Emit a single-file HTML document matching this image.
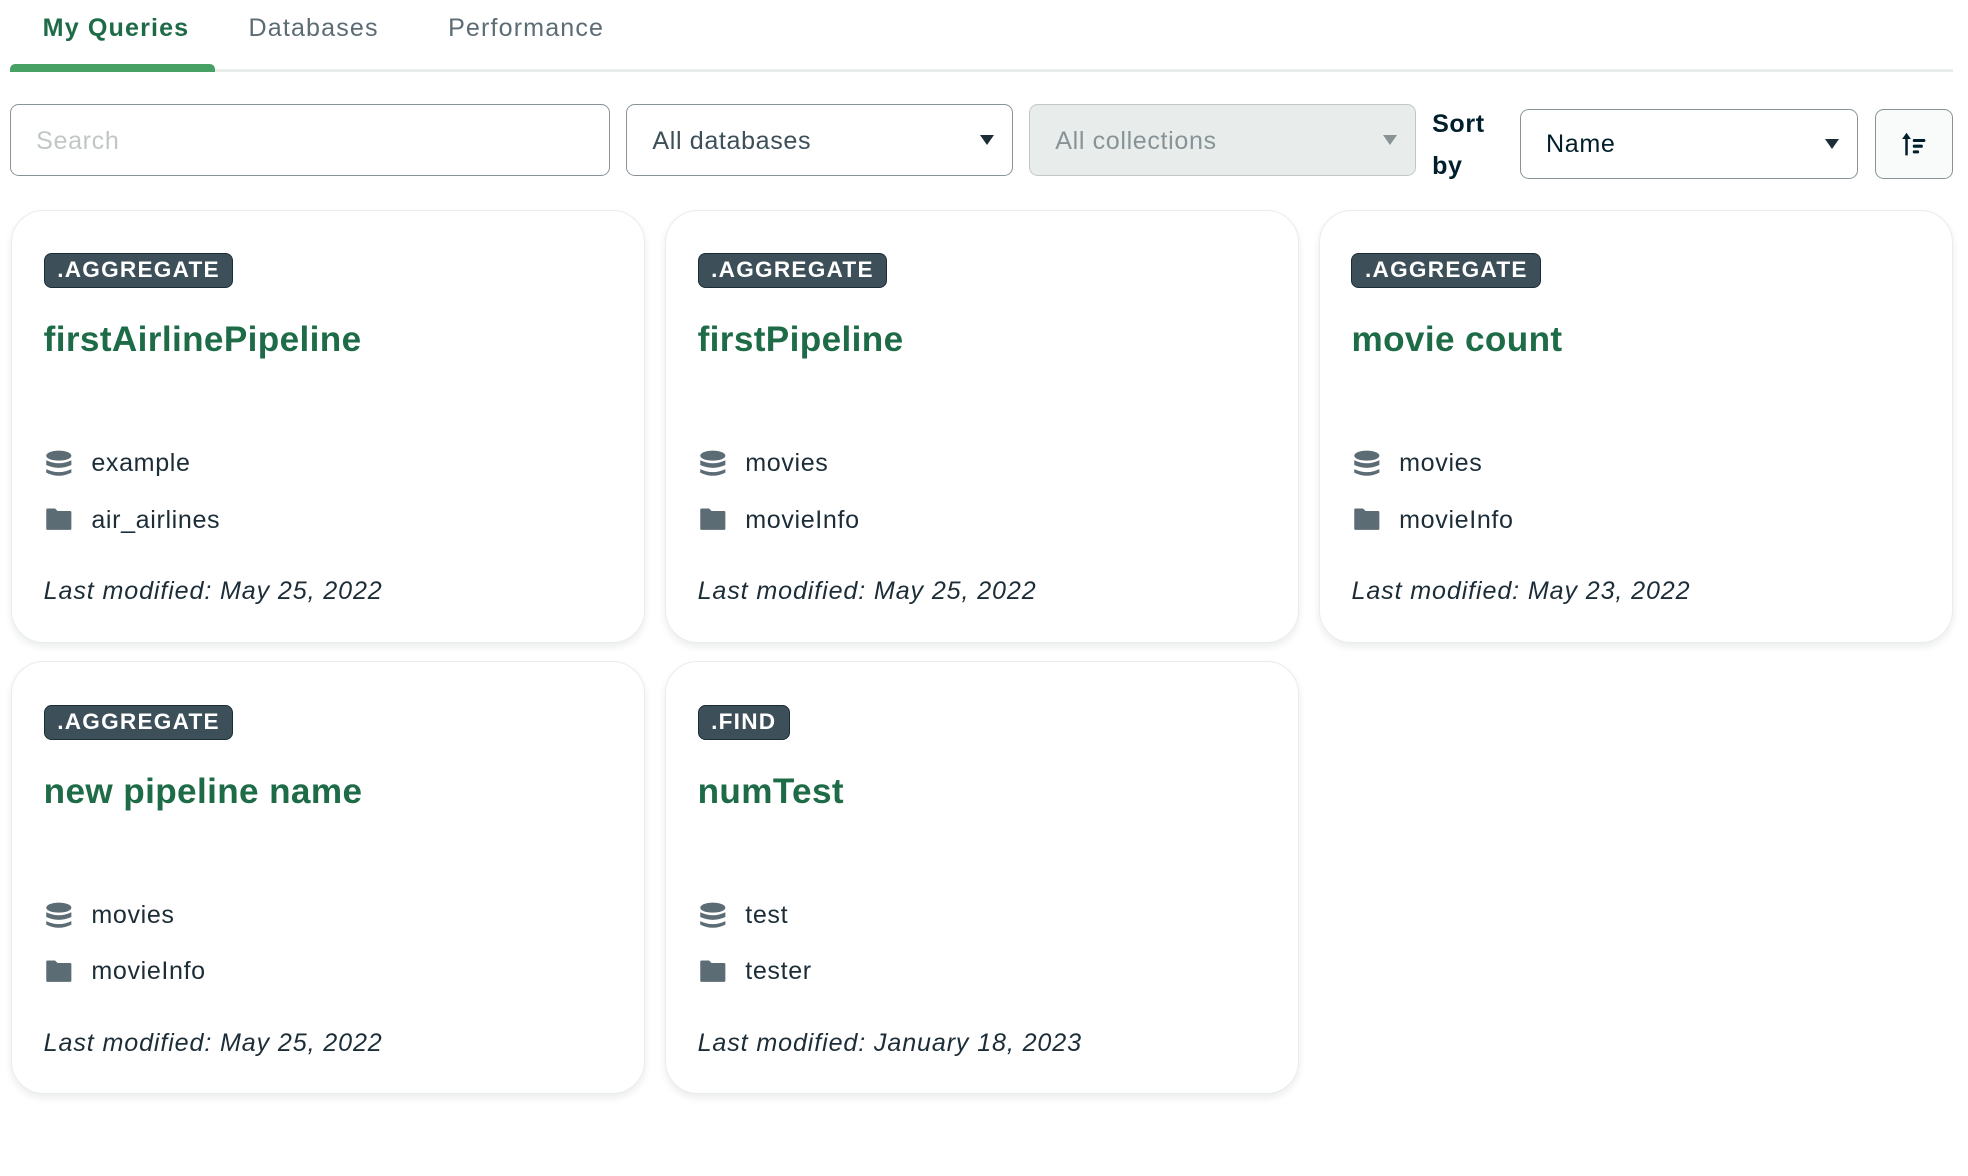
<!DOCTYPE html>
<html><head><meta charset="utf-8"><style>
html,body{margin:0;padding:0;background:#fff;}
body{width:1568px;height:937px;zoom:1.2551;position:relative;overflow:hidden;font-family:"Liberation Sans",sans-serif;color:#1c2d38;letter-spacing:0.5px;}
.abs{position:absolute;}
.tab{position:absolute;top:10px;font-size:20px;line-height:24px;color:#5c6c75;letter-spacing:0.9px;}
.field{position:absolute;box-sizing:border-box;border:1.5px solid #889397;border-radius:7px;font-size:20px;display:flex;align-items:center;padding-left:20px;background:#fff;}
.arrow{position:absolute;right:14px;top:50%;margin-top:-4px;width:0;height:0;border-left:6px solid transparent;border-right:6px solid transparent;border-top:8px solid #1c2d38;}
.card{position:absolute;width:505px;height:345px;box-sizing:border-box;border:1.5px solid #e8edeb;border-radius:26px;background:#fff;box-shadow:0 3px 6px rgba(0,30,43,0.08);}
.badge{position:absolute;left:25px;top:34px;height:28px;box-sizing:border-box;background:#3d4f58;border:1px solid #1c2d38;border-radius:6px;color:#fff;font-weight:bold;font-size:18px;line-height:26px;padding:0 10px;letter-spacing:1px;}
.title{position:absolute;left:25px;top:87px;font-size:28px;font-weight:bold;color:#1e6b47;letter-spacing:0.3px;}
.row{position:absolute;left:26px;font-size:20px;display:flex;align-items:center;color:#1c2d38;}
.row svg{margin-right:15px;}
.mod{position:absolute;left:25px;top:292px;font-size:20px;font-style:italic;color:#1c2d38;letter-spacing:0.7px;}
</style></head><body>
<div class="tab" style="left:34px;color:#1e6b47;font-weight:bold;">My Queries</div>
<div class="tab" style="left:198px;">Databases</div>
<div class="tab" style="left:357px;">Performance</div>
<div class="abs" style="left:8px;top:55px;width:1548px;height:2px;background:#e8edeb;"></div>
<div class="abs" style="left:8px;top:51px;width:163px;height:6px;background:#47a064;border-radius:4px 4px 0 0;"></div>

<div class="field" style="left:8px;top:83px;width:478px;height:57px;color:#c1c7c6;padding-top:2px;">Search</div>
<div class="field" style="left:499px;top:83px;width:308px;height:57px;color:#3d4f58;padding-top:2px;">All databases<div class="arrow"></div></div>
<div class="field" style="left:820px;top:83px;width:308px;height:57px;background:#e8edeb;border-color:#c1c7c6;color:#889397;padding-top:2px;">All collections<div class="arrow" style="border-top-color:#889397;"></div></div>
<div class="abs" style="left:1141px;top:83px;font-size:20px;font-weight:bold;line-height:33px;color:#001e2b;">Sort<br>by</div>
<div class="field" style="left:1211px;top:87px;width:269px;height:56px;color:#001e2b;">Name<div class="arrow"></div></div>
<div class="field" style="left:1494px;top:87px;width:62px;height:56px;background:#f9fbfa;padding:0;justify-content:center;">
<svg width="24" height="24" viewBox="0 0 24 24"><path d="M6 3 L2.5 8 H5 V21 H7 V8 H9.5 Z" fill="#001e2b"/><rect x="11" y="8" width="10" height="2.4" rx="1" fill="#001e2b"/><rect x="11" y="12.5" width="8" height="2.4" rx="1" fill="#001e2b"/><rect x="11" y="17" width="5" height="2.4" rx="1" fill="#001e2b"/></svg></div>

<svg width="0" height="0" style="position:absolute"><defs>
<g id="db"><ellipse cx="11" cy="4.5" rx="10" ry="4" fill="#5c6c75"/><path d="M1 8.2 Q11 13 21 8.2 V12 Q11 16.5 1 12 Z" fill="#5c6c75"/><path d="M1 15.2 Q11 20 21 15.2 V18 Q11 23 1 18 Z" fill="#5c6c75"/></g>
<g id="fd"><path d="M1 3 Q1 2 2 2 H8 L10 4 H20 Q21 4 21 5 V18 Q21 19 20 19 H2 Q1 19 1 18 Z" fill="#5c6c75"/></g>
</defs></svg>

<div class="card" style="left:9px;top:167px;"><div class="badge">.AGGREGATE</div><div class="title">firstAirlinePipeline</div>
<div class="row" style="top:190px;"><svg width="22" height="22"><use href="#db"/></svg>example</div>
<div class="row" style="top:235px;"><svg width="22" height="22"><use href="#fd"/></svg>air_airlines</div>
<div class="mod">Last modified: May 25, 2022</div></div>

<div class="card" style="left:530px;top:167px;"><div class="badge">.AGGREGATE</div><div class="title">firstPipeline</div>
<div class="row" style="top:190px;"><svg width="22" height="22"><use href="#db"/></svg>movies</div>
<div class="row" style="top:235px;"><svg width="22" height="22"><use href="#fd"/></svg>movieInfo</div>
<div class="mod">Last modified: May 25, 2022</div></div>

<div class="card" style="left:1051px;top:167px;"><div class="badge">.AGGREGATE</div><div class="title">movie count</div>
<div class="row" style="top:190px;"><svg width="22" height="22"><use href="#db"/></svg>movies</div>
<div class="row" style="top:235px;"><svg width="22" height="22"><use href="#fd"/></svg>movieInfo</div>
<div class="mod">Last modified: May 23, 2022</div></div>

<div class="card" style="left:9px;top:527px;"><div class="badge">.AGGREGATE</div><div class="title">new pipeline name</div>
<div class="row" style="top:190px;"><svg width="22" height="22"><use href="#db"/></svg>movies</div>
<div class="row" style="top:235px;"><svg width="22" height="22"><use href="#fd"/></svg>movieInfo</div>
<div class="mod">Last modified: May 25, 2022</div></div>

<div class="card" style="left:530px;top:527px;"><div class="badge">.FIND</div><div class="title">numTest</div>
<div class="row" style="top:190px;"><svg width="22" height="22"><use href="#db"/></svg>test</div>
<div class="row" style="top:235px;"><svg width="22" height="22"><use href="#fd"/></svg>tester</div>
<div class="mod">Last modified: January 18, 2023</div></div>
</body></html>
